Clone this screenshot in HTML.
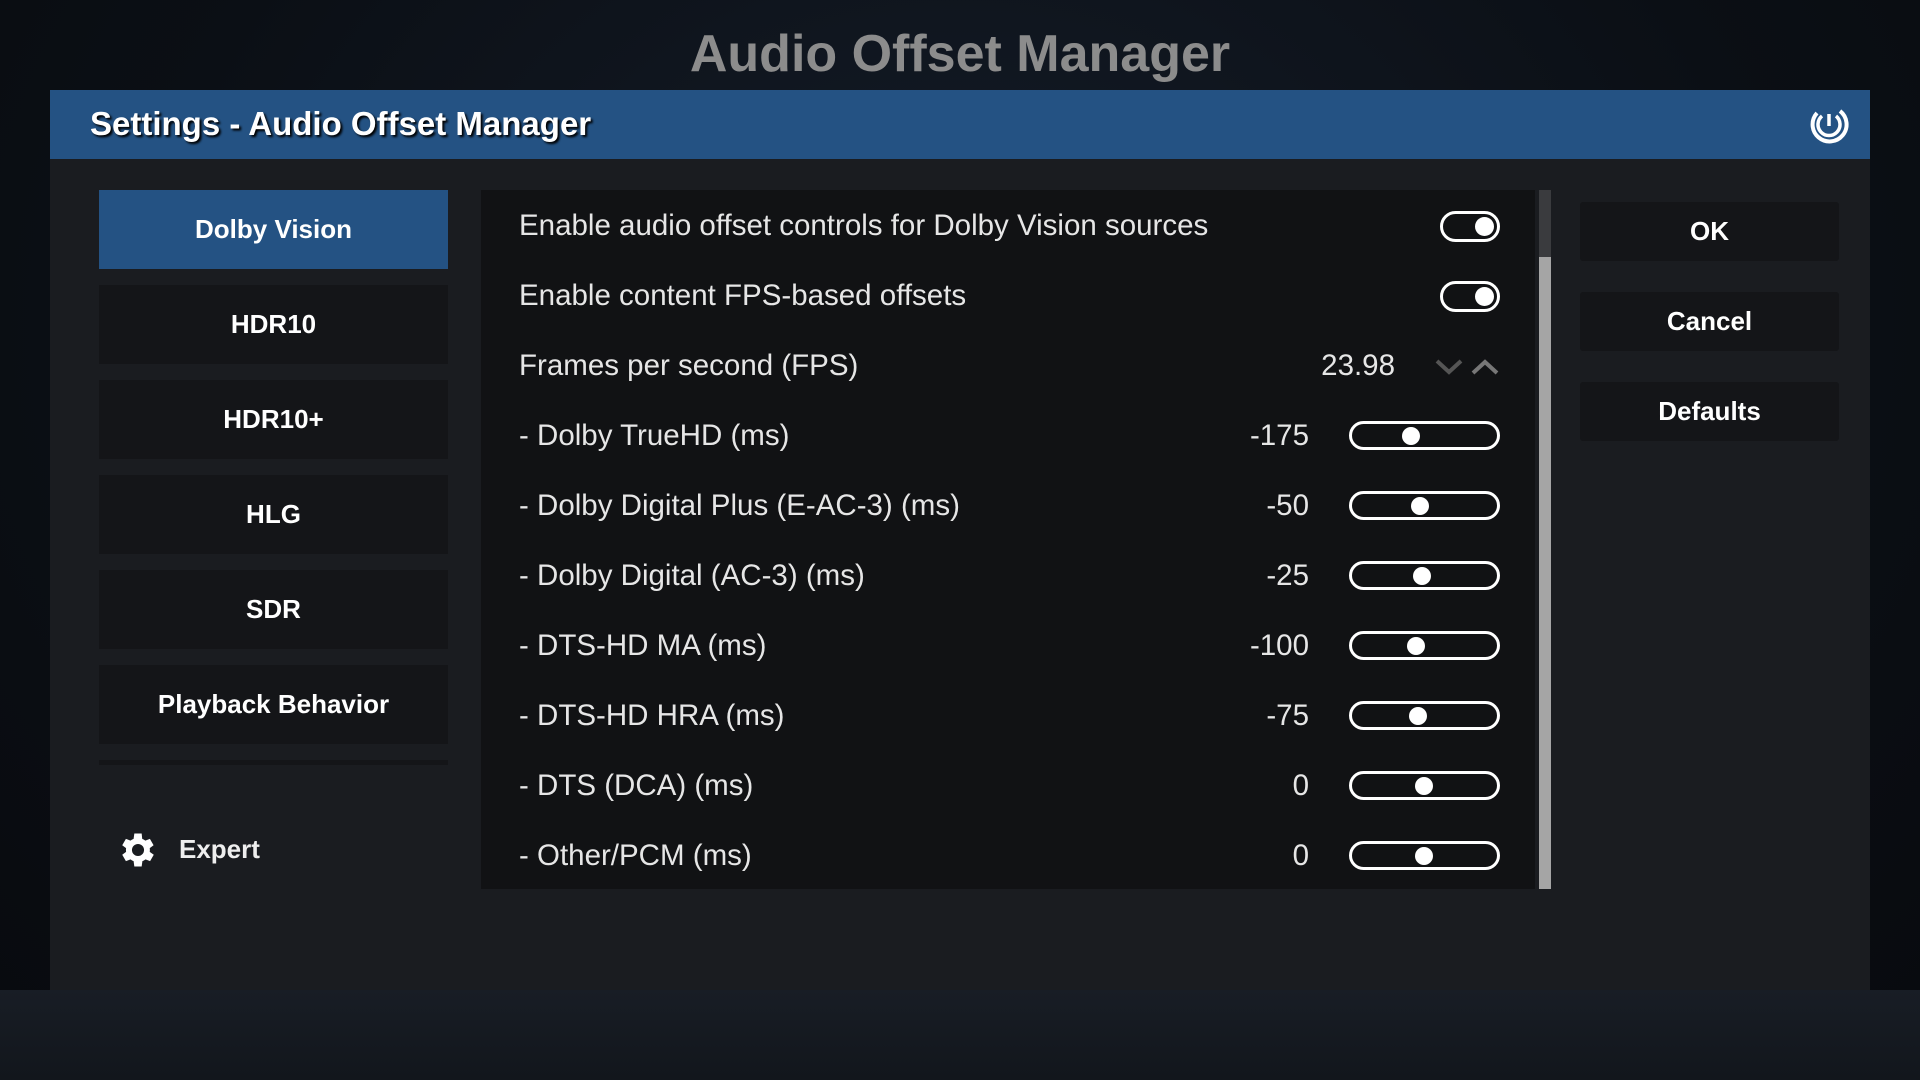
<!DOCTYPE html>
<html><head><meta charset="utf-8"><style>
*{margin:0;padding:0;box-sizing:border-box}
body{width:1920px;height:1080px;overflow:hidden;font-family:"Liberation Sans",sans-serif;background:radial-gradient(ellipse at 50% 30%,#141c28 0%,#0b0f15 60%,#080a0e 100%);position:relative;color:#fff}
.bottom{position:absolute;left:0;top:990px;width:1920px;height:90px;background:linear-gradient(#181d25,#12161c)}
.title{position:absolute;left:0;width:1920px;top:24px;text-align:center;font-size:52px;font-weight:bold;color:#8c8c8c}
.dlg{position:absolute;left:50px;top:90px;width:1820px;height:900px;background:#1a1c20}
.hdr{position:absolute;left:0;top:0;width:100%;height:69px;background:#245283}
.hdr span{position:absolute;left:40px;top:15px;font-size:33px;font-weight:bold;text-shadow:2px 2px 2px #000}
.menu{position:absolute;left:49px;width:349px;height:79px;background:#141518;text-align:center;line-height:79px;font-size:26px;font-weight:bold}
.menu.sel{background:#245283}
.panel{position:absolute;left:431px;top:100px;width:1054px;height:699px;background:#111214}
.sb{position:absolute;left:1489px;top:100px;width:12px;height:699px;background:#3a3b3e}
.sb div{position:absolute;left:0;top:67px;width:12px;height:632px;background:#a5a5a5}
.row{position:absolute;left:0;width:1054px;height:70px}
.row .l{position:absolute;left:38px;top:19px;font-size:29.5px;color:#e6e6e6}
.row .v{position:absolute;right:226px;top:19px;font-size:29.5px;color:#e6e6e6}
.tog{position:absolute;left:959px;top:21px;width:60px;height:31px;border:3px solid #fff;border-radius:16px}
.tog::after{content:"";position:absolute;right:3px;top:3px;width:19px;height:19px;border-radius:50%;background:#fff}
.sl{position:absolute;left:868px;top:21px;width:151px;height:29px;border:3px solid #fff;border-radius:15px}
.sl i{position:absolute;top:3px;width:18px;height:18px;border-radius:50%;background:#fff}
.btn{position:absolute;left:1530px;width:259px;height:59px;background:#141518;text-align:center;line-height:59px;font-size:26px;font-weight:bold;border-radius:3px}
</style></head><body>
<div class="bottom"></div>
<div class="title">Audio Offset Manager</div>
<div class="dlg">
<div class="hdr"><span>Settings - Audio Offset Manager</span>
<svg style="position:absolute;left:1757px;top:13px" width="44" height="44" viewBox="0 0 44 44"><path d="M10 10 A17 17 0 1 0 33 8" fill="none" stroke="#fff" stroke-width="4"/><path d="M15 13 A11 11 0 1 0 29 13" fill="none" stroke="#fff" stroke-width="3.5"/><line x1="22" y1="11" x2="22" y2="23" stroke="#fff" stroke-width="3.5"/></svg></div>
<div class="menu sel" style="top:100px">Dolby Vision</div>
<div class="menu" style="top:195px">HDR10</div>
<div class="menu" style="top:290px">HDR10+</div>
<div class="menu" style="top:385px">HLG</div>
<div class="menu" style="top:480px">SDR</div>
<div class="menu" style="top:575px">Playback Behavior</div>
<div class="menu" style="top:670px;height:5px"></div>
<svg style="position:absolute;left:66px;top:738px" width="44" height="44" viewBox="0 0 24 24"><path fill="#fff" d="M19.4 13a7.5 7.5 0 0 0 0-2l2.1-1.6-2-3.5-2.5 1a7 7 0 0 0-1.7-1L15 3h-4l-.4 2.9a7 7 0 0 0-1.7 1l-2.5-1-2 3.5L6.5 11a7.5 7.5 0 0 0 0 2l-2.1 1.6 2 3.5 2.5-1a7 7 0 0 0 1.7 1L11 21h4l.4-2.9a7 7 0 0 0 1.7-1l2.5 1 2-3.5zM13 15.3a3.3 3.3 0 1 1 0-6.6 3.3 3.3 0 0 1 0 6.6z" transform="translate(-1 0)"/></svg>
<div style="position:absolute;left:129px;top:744px;font-size:26px;font-weight:bold;color:#eee">Expert</div>
<div class="panel">
<div class="row" style="top:0"><span class="l">Enable audio offset controls for Dolby Vision sources</span><div class="tog"></div></div>
<div class="row" style="top:70px"><span class="l">Enable content FPS-based offsets</span><div class="tog"></div></div>
<div class="row" style="top:140px"><span class="l">Frames per second (FPS)</span><span class="v" style="right:140px">23.98</span>
<svg style="position:absolute;left:954px;top:28px" width="66" height="18" viewBox="0 0 66 18"><path d="M2 3 L14 14 L26 3" fill="none" stroke="#555" stroke-width="4"/><path d="M38 15 L50 4 L62 15" fill="none" stroke="#777" stroke-width="4"/></svg></div>
<div class="row" style="top:210px"><span class="l">- Dolby TrueHD (ms)</span><span class="v">-175</span><div class="sl"><i style="left:50px"></i></div></div>
<div class="row" style="top:280px"><span class="l">- Dolby Digital Plus (E-AC-3) (ms)</span><span class="v">-50</span><div class="sl"><i style="left:59px"></i></div></div>
<div class="row" style="top:350px"><span class="l">- Dolby Digital (AC-3) (ms)</span><span class="v">-25</span><div class="sl"><i style="left:61px"></i></div></div>
<div class="row" style="top:420px"><span class="l">- DTS-HD MA (ms)</span><span class="v">-100</span><div class="sl"><i style="left:55px"></i></div></div>
<div class="row" style="top:490px"><span class="l">- DTS-HD HRA (ms)</span><span class="v">-75</span><div class="sl"><i style="left:57px"></i></div></div>
<div class="row" style="top:560px"><span class="l">- DTS (DCA) (ms)</span><span class="v">0</span><div class="sl"><i style="left:63px"></i></div></div>
<div class="row" style="top:630px"><span class="l">- Other/PCM (ms)</span><span class="v">0</span><div class="sl"><i style="left:63px"></i></div></div>
</div>
<div class="sb"><div></div></div>
<div class="btn" style="top:112px">OK</div>
<div class="btn" style="top:202px">Cancel</div>
<div class="btn" style="top:292px">Defaults</div>
</div>
</body></html>
